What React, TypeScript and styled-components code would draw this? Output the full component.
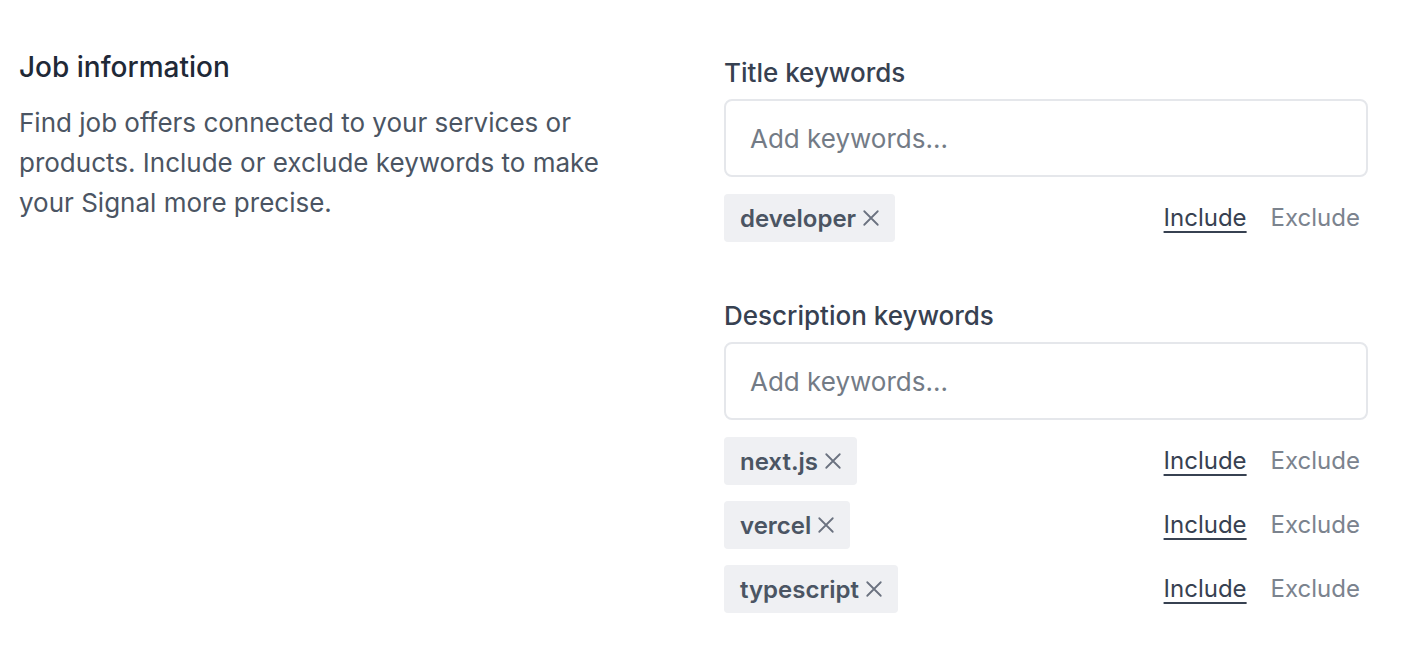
import styled, { createGlobalStyle } from "styled-components";

const GlobalStyle = createGlobalStyle`
  body {
    margin: 0;
    background: #ffffff;
    font-family: Inter, "Noto Sans", sans-serif;
  }
`;

const Page = styled.div`
  display: grid;
  grid-template-columns: 620px 644px;
  column-gap: 85px;
  padding: 51px 0 0 19px;
`;

const Intro = styled.div`
  display: flex;
  flex-direction: column;
  gap: 20px;
`;

const Heading = styled.h2`
  margin: 0;
  font-size: 28px;
  line-height: 32px;
  font-weight: 500;
  color: #1f2937;
`;

const Description = styled.p`
  margin: 0;
  font-size: 26px;
  line-height: 40px;
  color: #4b5563;
  max-width: 600px;
`;

const Fields = styled.div`
  display: flex;
  flex-direction: column;
  gap: 58px;
  padding-top: 6px;
`;

const Field = styled.div`
  display: flex;
  flex-direction: column;
`;

const Label = styled.label`
  font-size: 26px;
  line-height: 32px;
  font-weight: 500;
  color: #374151;
  margin-bottom: 10px;
`;

const Input = styled.input`
  box-sizing: border-box;
  height: 78px;
  width: 100%;
  border: 2px solid #e5e7eb;
  border-radius: 8px;
  padding: 0 24px;
  font-family: inherit;
  font-size: 26px;
  color: #111827;
  outline: none;

  &::placeholder {
    color: #737b86;
  }
`;

const Rows = styled.div`
  display: flex;
  flex-direction: column;
  gap: 16px;
  margin-top: 17px;
`;

const Row = styled.div`
  display: flex;
  align-items: center;
  justify-content: space-between;
  height: 48px;
`;

const Tag = styled.span`
  display: inline-flex;
  align-items: center;
  gap: 6px;
  height: 48px;
  box-sizing: border-box;
  padding: 0 15px 0 16px;
  background: #eff0f3;
  border-radius: 4px;
  font-size: 24px;
  font-weight: 600;
  color: #4b5563;
`;

const Remove = styled.svg`
  width: 18px;
  height: 18px;
  color: #6b7280;
`;

const Modes = styled.div`
  display: flex;
  gap: 24px;
  padding-right: 8px;
`;

const Mode = styled.span<{ $active?: boolean }>`
  font-size: 24px;
  line-height: 32px;
  color: ${(p) => (p.$active ? "#374151" : "#7b838e")};
  text-decoration: ${(p) => (p.$active ? "underline" : "none")};
  text-decoration-thickness: 2px;
  text-underline-offset: 5px;
  cursor: pointer;
`;

function KeywordRow({ word }: { word: string }) {
  return (
    <Row>
      <Tag>
        {word}
        <Remove viewBox="0 0 16 16" fill="none" stroke="currentColor" strokeWidth="1.6" strokeLinecap="round">
          <path d="M2 2l12 12M14 2L2 14" />
        </Remove>
      </Tag>
      <Modes>
        <Mode $active>Include</Mode>
        <Mode>Exclude</Mode>
      </Modes>
    </Row>
  );
}

function KeywordField({ label, words }: { label: string; words: string[] }) {
  return (
    <Field>
      <Label>{label}</Label>
      <Input placeholder="Add keywords..." />
      <Rows>
        {words.map((w) => (
          <KeywordRow key={w} word={w} />
        ))}
      </Rows>
    </Field>
  );
}

export default function App() {
  return (
    <>
      <GlobalStyle />
      <Page>
        <Intro>
          <Heading>Job information</Heading>
          <Description>
            Find job offers connected to your services or products. Include or exclude keywords to make your
            Signal more precise.
          </Description>
        </Intro>
        <Fields>
          <KeywordField label="Title keywords" words={["developer"]} />
          <KeywordField label="Description keywords" words={["next.js", "vercel", "typescript"]} />
        </Fields>
      </Page>
    </>
  );
}
